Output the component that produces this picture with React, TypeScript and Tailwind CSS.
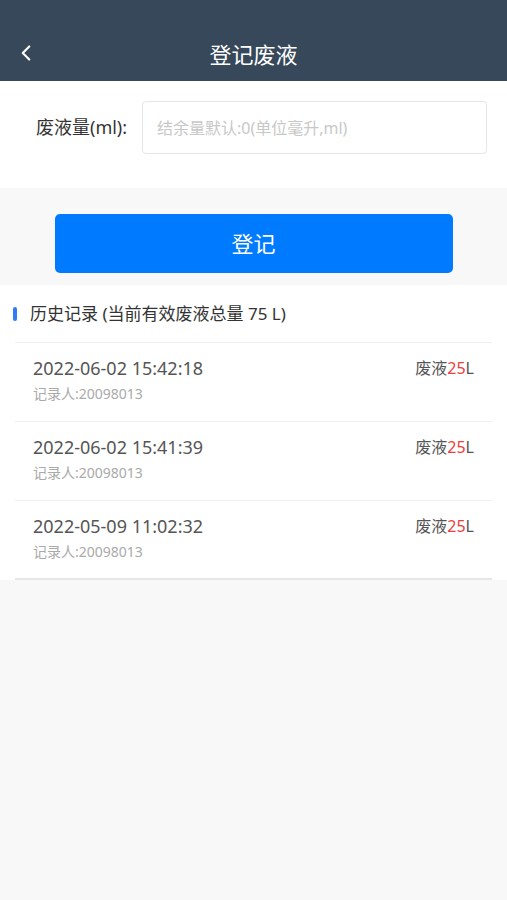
import { ChevronLeft } from "lucide-react";

const records = [
  { time: "2022-06-02 15:42:18", user: "20098013", amount: 25 },
  { time: "2022-06-02 15:41:39", user: "20098013", amount: 25 },
  { time: "2022-05-09 11:02:32", user: "20098013", amount: 25 },
];

export default function App() {
  return (
    <div
      className="min-h-[900px] bg-[#f8f8f8] flex flex-col"
      style={{ fontFamily: '"Noto Sans", "Noto Sans CJK SC", sans-serif' }}
    >
      {/* Header */}
      <div className="h-[81px] bg-[#36485a] flex items-end pb-[12px] relative">
        <button className="absolute left-[13px] bottom-[15px] text-white">
          <ChevronLeft size={26} strokeWidth={2} />
        </button>
        <h1 className="w-full text-center text-white text-[22px] leading-[30px]">登记废液</h1>
      </div>

      {/* Input section */}
      <div className="bg-white h-[107px] flex items-start pt-[20px] px-[36px]">
        <span className="text-[18px] text-[#333] w-[106px] shrink-0 leading-[53px]">废液量(ml):</span>
        <input
          className="flex-1 h-[53px] border border-[#e6e6e6] rounded-[4px] px-[14px] text-[16px] outline-none placeholder:text-[#c8c8c8] -mr-[16px]"
          placeholder="结余量默认:0(单位毫升,ml)"
        />
      </div>

      {/* Button */}
      <div className="h-[97px] flex justify-center pt-[26px]">
        <button className="w-[398px] h-[59px] bg-[#007aff] rounded-[5px] text-white text-[22px]">登记</button>
      </div>

      {/* History */}
      <div className="bg-white">
        <div className="h-[57px] flex items-center pl-[13px] gap-[13px]">
          <div className="w-[4px] h-[14px] rounded-full bg-[#2f7cf6]" />
          <span className="text-[17px] text-[#333]">历史记录 (当前有效废液总量 75 L)</span>
        </div>
        <div className="mx-[15px] border-t border-[#f0f0f0]">
          {records.map((r, i) => (
            <div
              key={i}
              className={`h-[79px] flex justify-between px-[18px] pt-[13px] ${i < records.length - 1 ? "border-b border-[#f0f0f0]" : "border-b-2 border-[#e6e6e6]"}`}
            >
              <div className="flex flex-col">
                <span className="text-[18px] text-[#555] leading-[24px]">{r.time}</span>
                <span className="text-[14px] text-[#aaa] leading-[20px] mt-[4px]">记录人:{r.user}</span>
              </div>
              <span className="text-[16px] text-[#555] leading-[24px]">
                废液<span className="text-[#f03c3c]">{r.amount}</span>L
              </span>
            </div>
          ))}
        </div>
      </div>
    </div>
  );
}
